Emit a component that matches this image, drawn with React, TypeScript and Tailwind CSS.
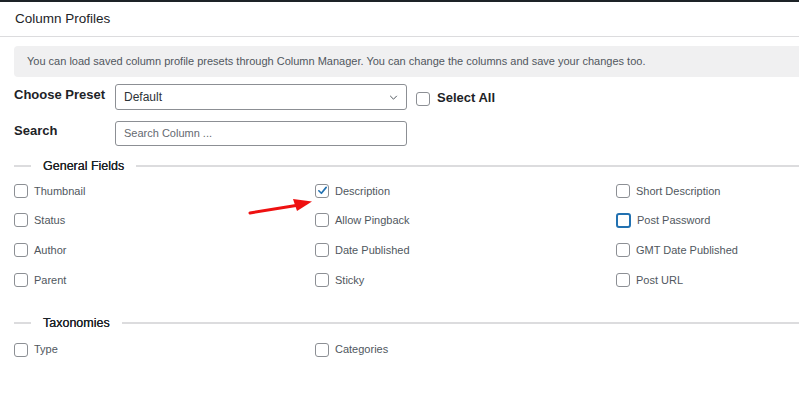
import React from "react"

type Field = { label: string; checked?: boolean; focused?: boolean }

const generalFields: Field[] = [
  { label: "Thumbnail" },
  { label: "Description", checked: true },
  { label: "Short Description" },
  { label: "Status" },
  { label: "Allow Pingback" },
  { label: "Post Password", focused: true },
  { label: "Author" },
  { label: "Date Published" },
  { label: "GMT Date Published" },
  { label: "Parent" },
  { label: "Sticky" },
  { label: "Post URL" },
]

const taxonomies: Field[] = [{ label: "Type" }, { label: "Categories" }]

function Box({ checked, focused }: { checked?: boolean; focused?: boolean }) {
  return (
    <span
      className={`shrink-0 rounded-[3px] bg-white flex items-center justify-center ${
        focused ? "border-2 border-[#2271b1] w-[15px] h-[15px]" : "border border-[#8c8f94] w-[14px] h-[14px]"
      }`}
    >
      {checked ? (
        <svg viewBox="0 0 12 12" className="w-[11px] h-[11px]" aria-hidden>
          <path d="M2 6.3 L4.8 9 L10 2.6" fill="none" stroke="#2271b1" strokeWidth="1.8" strokeLinecap="round" strokeLinejoin="round" />
        </svg>
      ) : null}
    </span>
  )
}

function Legend({ title }: { title: string }) {
  return (
    <div className="flex items-center">
      <div className="w-[17px] h-[2px] bg-[#dcdcde]" />
      <span className="px-3 text-[12.5px] text-[#1d2327] [text-shadow:0_0_0.3px_#1d2327]">{title}</span>
      <div className="flex-1 h-[2px] bg-[#dcdcde]" />
    </div>
  )
}

function FieldGrid({ fields }: { fields: Field[] }) {
  return (
    <div className="grid grid-cols-[301px_301px_1fr] gap-y-[15.7px]">
      {fields.map((f) => (
        <label key={f.label} className="flex items-center gap-[6px] text-[11px] text-[#50575e] h-[14px]">
          <Box checked={f.checked} focused={f.focused} />
          <span>{f.label}</span>
        </label>
      ))}
    </div>
  )
}

export default function App() {
  return (
    <div
      className="relative w-[799px] h-[416px] bg-white overflow-hidden border-t-2 border-[#1d2327]"
      style={{ fontFamily: '"Liberation Sans", Arial, sans-serif' }}
    >
      <div className="h-[35px] flex items-center px-[15px] border-b border-[#dcdcde]">
        <h2 className="text-[13.5px] text-[#1d2327]">Column Profiles</h2>
      </div>

      <div className="pl-[14px]">
        <div className="mt-[9px] h-[31px] rounded-l-[4px] bg-[#f0f0f1] flex items-center pl-[13px] text-[11px] text-[#50575e]">
          You can load saved column profile presets through Column Manager. You can change the columns and save your changes too.
        </div>

        <div className="mt-[7px] flex items-start">
          <span className="w-[101px] pt-[1px] text-[13px] font-bold text-[#1d2327]">Choose Preset</span>
          <div className="w-[292px] h-[26px] border border-[#8c8f94] rounded-[3px] flex items-center justify-between px-[8px]">
            <span className="text-[12px] text-[#2c3338]">Default</span>
            <svg viewBox="0 0 10 6" className="w-[9px] h-[5px]" aria-hidden>
              <path d="M1 1 L5 5 L9 1" fill="none" stroke="#50575e" strokeWidth="1.2" />
            </svg>
          </div>
          <label className="ml-[9px] mt-[6px] flex items-center gap-[7px] text-[13px] font-bold text-[#1d2327]">
            <Box />
            <span className="-mt-[2px]">Select All</span>
          </label>
        </div>

        <div className="mt-[11px] flex items-start">
          <span className="w-[101px] text-[13px] font-bold text-[#1d2327]">Search</span>
          <div className="w-[292px] h-[25px] border border-[#8c8f94] rounded-[3px] flex items-center px-[8px]">
            <span className="text-[11px] text-[#646970]">Search Column ...</span>
          </div>
        </div>

        <div className="mt-[11px]">
          <Legend title="General Fields" />
        </div>
        <div className="mt-[8px]">
          <FieldGrid fields={generalFields} />
        </div>

        <div className="mt-[27px]">
          <Legend title="Taxonomies" />
        </div>
        <div className="mt-[10px]">
          <FieldGrid fields={taxonomies} />
        </div>
      </div>

      <svg className="absolute left-0 top-0 w-[799px] h-[416px] pointer-events-none" viewBox="0 0 799 416" aria-hidden>
        <path d="M250 211 L296 203.5" stroke="#ee1111" strokeWidth="3" strokeLinecap="round" />
        <path d="M312 199.5 L293 197 L297 209 Z" fill="#ee1111" />
      </svg>
    </div>
  )
}
